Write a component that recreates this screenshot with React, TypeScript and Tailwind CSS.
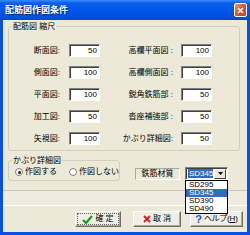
import type { ReactNode } from "react";

const FONT = "font-['Liberation_Sans','Noto_Sans_CJK_JP',sans-serif]";

const leftRows = [
  { label: "断面図:", value: "50" },
  { label: "側面図:", value: "100" },
  { label: "平面図:", value: "100" },
  { label: "加工図:", value: "50" },
  { label: "矢視図:", value: "100" },
];

const rightRows = [
  { label: "高欄平面図 :", value: "100" },
  { label: "高欄側面図 :", value: "100" },
  { label: "鋭角鉄筋部 :", value: "50" },
  { label: "沓座補強部 :", value: "50" },
  { label: "かぶり詳細図:", value: "50" },
];

function NumBox({ value }: { value: string }) {
  return (
    <div className="flex h-[13px] w-[31px] items-center justify-end border border-t-[#808080] border-l-[#808080] border-b-white border-r-white bg-white pr-[2px] text-[8px] leading-none text-black shadow-[inset_1px_1px_0_#404040]">
      {value}
    </div>
  );
}

function Radio({ checked, label }: { checked?: boolean; label: string }) {
  return (
    <div className="flex shrink-0 items-center gap-[2px] whitespace-nowrap">
      <span className="flex h-[8px] w-[8px] shrink-0 items-center justify-center rounded-full border border-[#808080] bg-white">
        {checked && <span className="h-[3px] w-[3px] rounded-full bg-[#202020]" />}
      </span>
      <span className="text-[8px] leading-none text-black">{label}</span>
    </div>
  );
}

function Btn({
  width,
  focus,
  icon,
  children,
}: {
  width: string;
  focus?: boolean;
  icon: ReactNode;
  children: ReactNode;
}) {
  return (
    <div
      className={`flex h-[16px] items-center justify-center border border-t-white border-l-white border-b-[#716F64] border-r-[#716F64] bg-[#F1EFE5] shadow-[inset_-1px_-1px_0_#ACA899] ${width}`}
    >
      <div
        className={`flex h-full w-full items-center justify-center gap-[2px] whitespace-nowrap ${
          focus ? "outline outline-1 -outline-offset-2 outline-dotted outline-[#606060]" : ""
        }`}
      >
        {icon}
        <span className="text-[8px] leading-none text-black">{children}</span>
      </div>
    </div>
  );
}

export default function App() {
  return (
    <div className={`flex h-[235px] w-[250px] flex-col bg-[#0851E3] ${FONT}`}>
      {/* title bar */}
      <div className="flex h-[20px] shrink-0 items-center justify-between bg-[linear-gradient(180deg,#3A8BFF_0%,#0A5FF0_15%,#0055EA_50%,#0050E0_85%,#0046D0_100%)] pl-[5px] pr-[3px]">
        <span className="text-[9px] font-bold leading-none text-white [text-shadow:1px_1px_0_#0A246A]">
          配筋図作図条件
        </span>
        <div className="flex h-[14px] w-[13px] items-center justify-center rounded-[2px] border border-white bg-[linear-gradient(135deg,#F09A7C,#E0542E_45%,#C8401C)]">
          <svg width="7" height="7" viewBox="0 0 7 7">
            <path d="M1 1 L6 6 M6 1 L1 6" stroke="white" strokeWidth="1.6" />
          </svg>
        </div>
      </div>

      {/* body */}
      <div className="relative mx-[3px] mb-[3px] flex flex-1 flex-col bg-[#ECE9D8] text-black">
        <fieldset className="ml-[5px] mr-[7px] mt-[1px] rounded-[3px] border border-[#D0D0BF] pb-[5px]">
          <legend className="ml-[3px] px-[1px] text-[8px] leading-[11px]">配筋図 縮尺</legend>
          <div className="flex flex-col gap-[9px] pt-[12px]">
            {leftRows.map((r, i) => (
              <div key={r.label} className="flex h-[13px] items-center whitespace-nowrap">
                <span className="w-[51px] text-right text-[8px] leading-none">{r.label}</span>
                <div className="ml-[9px]">
                  <NumBox value={r.value} />
                </div>
                <span className="w-[73px] text-right text-[8px] leading-none">{rightRows[i].label}</span>
                <div className="ml-[8px]">
                  <NumBox value={rightRows[i].value} />
                </div>
              </div>
            ))}
          </div>
        </fieldset>

        <div className="mt-[4px] flex items-start">
          <fieldset className="ml-[5px] w-[110px] shrink-0 rounded-[3px] border border-[#D0D0BF] pb-[2px]">
            <legend className="ml-[3px] px-[1px] text-[8px] leading-[11px]">かぶり詳細図</legend>
            <div className="flex h-[12px] items-center gap-[12px] overflow-visible pl-[6px]">
              <Radio checked label="作図する" />
              <Radio label="作図しない" />
            </div>
          </fieldset>

          <div className="ml-[15px] mt-[12px] flex items-center gap-[5px]">
            <div className="flex h-[12px] w-[45px] items-center justify-center whitespace-nowrap border border-t-[#ACA899] border-l-[#ACA899] border-b-white border-r-white text-[8px] leading-none">
              鉄筋材質
            </div>
            <div className="relative">
              <div className="flex h-[13px] w-[43px] items-center border border-t-[#808080] border-l-[#808080] border-b-white border-r-white bg-white shadow-[inset_1px_1px_0_#404040]">
                <span className="ml-[2px] flex h-[9px] w-[25px] items-center bg-[#316AC5] pl-[1px] text-[8px] leading-none text-white">
                  SD345
                </span>
                <span className="ml-auto mr-[1px] flex h-[10px] w-[12px] items-center justify-center border border-t-white border-l-white border-b-[#404040] border-r-[#404040] bg-[#ECE9D8]">
                  <svg width="5" height="3" viewBox="0 0 5 3">
                    <path d="M0 0 H5 L2.5 3 Z" fill="black" />
                  </svg>
                </span>
              </div>
              <div className="absolute left-0 top-full z-10 flex w-[43px] flex-col border border-black bg-white text-[8px] leading-[8px]">
                <span className="pl-[3px]">SD295</span>
                <span className="bg-[#316AC5] pl-[3px] text-white">SD345</span>
                <span className="pl-[3px]">SD390</span>
                <span className="pl-[3px]">SD490</span>
              </div>
            </div>
          </div>
        </div>

        <div className="mt-[9px] h-[16px] border-t border-b border-t-[#C8C5B4] border-b-white bg-[#EFECDF]" />

        <div className="mt-[5px] flex items-center">
          <div className="ml-[72px]">
            <Btn
              width="w-[46px]"
              focus
              icon={
                <svg width="11" height="9" viewBox="0 0 11 9">
                  <path d="M1 5 L4 8 L10 1" stroke="#1E9A1E" strokeWidth="2.2" fill="none" />
                </svg>
              }
            >
              確 定
            </Btn>
          </div>
          <div className="ml-[12px]">
            <Btn
              width="w-[48px]"
              icon={
                <svg width="8" height="8" viewBox="0 0 8 8">
                  <path d="M1 1 L7 7 M7 1 L1 7" stroke="#D81E1E" strokeWidth="2" />
                </svg>
              }
            >
              取 消
            </Btn>
          </div>
          <div className="ml-[9px]">
            <Btn
              width="w-[53px]"
              icon={<span className="text-[11px] font-bold leading-none text-[#1E50D0]">?</span>}
            >
              <span className="tracking-[-0.3px]">ヘルプ(</span>
              <span className="underline">H</span>)
            </Btn>
          </div>
        </div>
      </div>
    </div>
  );
}
